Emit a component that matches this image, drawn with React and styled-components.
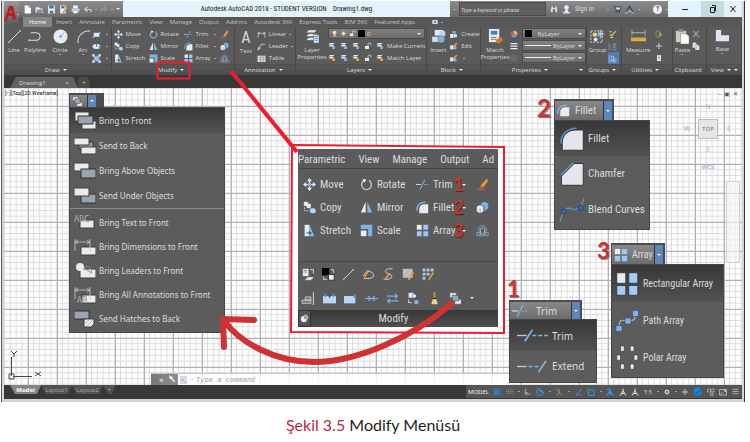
import React from 'react'
import styled, { createGlobalStyle, css, ThemeProvider } from 'styled-components'

const theme = {
  panel: '#5b5b5b',
  dark: '#383838',
  text: '#dcdcdc',
  red: '#ed1c2e',
  marker: '#cf3230',
  blue: '#7fb2e5',
  ui: '"Open Sans", "Noto Sans", sans-serif',
  wide: '"Noto Sans", sans-serif',
  narrow: '"Liberation Sans Narrow", "Roboto Condensed", Roboto, sans-serif',
  caption: 'Lato, sans-serif',
}

const GlobalStyle = createGlobalStyle`
  * {
    box-sizing: border-box;
  }

  body {
    margin: 0;
    background: #fff;
  }

  button, input, select {
    margin: 0;
    padding: 0;
    border: 0;
    background: none;
    color: inherit;
    font: inherit;
  }
`

/* ---------- icons ---------- */

const L = '#e8ecf2'
const B = '#7fb2e5'
const O = '#e59a3c'

const glyphs = {
  line: (
    <>
      <path d="M2 14L14 2" stroke={L} />
      <path d="M1 13h2v2H1zM13 1h2v2h-2z" fill={B} />
    </>
  ),
  polyline: (
    <>
      <path d="M1 12h8a4 4 0 000-8H4" stroke={L} fill="none" />
      <path d="M0 11h2v2H0zM3 3h2v2H3zM9 11h2v2H9z" fill={B} />
    </>
  ),
  circle: (
    <>
      <circle cx="8" cy="8" r="7.5" fill={L} />
      <path d="M8 8l4-4" stroke={B} />
      <path d="M7 7h2v2H7z" fill="#4a7fc0" />
    </>
  ),
  arc: (
    <>
      <path d="M2 14C2 7 7 2 14 2" stroke={L} fill="none" />
      <path d="M1 13h2v2H1zM5 4h2v2H5zM13 1h2v2h-2z" fill={B} />
    </>
  ),
  rect: (
    <>
      <path d="M3 5h10v7H3z" fill={L} />
      <path d="M1 11h3v3H1zM12 3h3v3h-3z" fill={B} />
    </>
  ),
  ellipse: (
    <>
      <ellipse cx="8" cy="8" rx="7" ry="4.5" fill={L} />
      <path d="M7 3h2v6H7zM12 7h3v3h-3z" fill="#4a7fc0" />
    </>
  ),
  hatch: (
    <>
      <path d="M3 3h10v10H3z" fill={B} />
      <path d="M1 1h3v3H1zM12 1h3v3h-3zM1 12h3v3H1zM12 12h3v3h-3zM5 9l4-4M7 12l5-5" fill={L} stroke={L} />
    </>
  ),
  move: (
    <>
      <path d="M8 0l3 4H5zM8 16l3-4H5zM0 8l4-3v6zM16 8l-4-3v6z" fill={L} />
      <path d="M6 6h4v4H6z" fill={B} />
      <path d="M8 3v3M8 10v3M3 8h3M10 8h3" stroke={L} strokeWidth="1.5" />
    </>
  ),
  copy: (
    <>
      <path d="M1 1h5v5H1z" fill={L} />
      <circle cx="7" cy="6" r="3" fill={L} />
      <path d="M2 8v4h4" stroke={L} fill="none" strokeDasharray="2 1" />
      <path d="M8 9h4v5H8z" fill={B} />
      <circle cx="12.500" cy="12" r="3.200" fill="#b9d6f5" />
    </>
  ),
  stretch: (
    <>
      <path d="M2 1h6v14H2z" fill={L} />
      <path d="M8 1l6 14H8z" fill={B} />
      <path d="M4 11h5M7 9l3 2-3 2" stroke="#1f3b5c" fill="none" />
    </>
  ),
  rotate: (
    <>
      <path d="M5 3a6 6 0 106 0" stroke="#bcd0e2" strokeWidth="1.600" fill="none" />
      <path d="M3 1l5 1-3 4z" fill={L} />
    </>
  ),
  mirror: (
    <>
      <path d="M7 1v13H1z" fill={L} />
      <path d="M9 1v13h6z" fill={B} />
    </>
  ),
  scale: (
    <>
      <path d="M1 1h14v14h-5V6H1z" fill={B} />
      <path d="M1 8h7v7H1z" fill={L} />
    </>
  ),
  trim: (
    <>
      <path d="M0 8h6" stroke={L} />
      <path d="M5 14l6-12" stroke={B} strokeWidth="1.300" />
      <path d="M10 8h6" stroke={B} strokeDasharray="2 1" />
    </>
  ),
  trimWide: (
    <>
      <path d="M0 8h5" stroke="#c4c4c4" strokeWidth=".7" />
      <path d="M4 11l4-6" stroke={B} strokeWidth=".9" />
      <path d="M8 8h8" stroke={B} strokeWidth=".7" strokeDasharray="2 1" />
    </>
  ),
  extendWide: (
    <>
      <path d="M0 8h5" stroke="#c4c4c4" strokeWidth=".7" />
      <path d="M6 8h5" stroke={B} strokeWidth=".7" strokeDasharray="2 1" />
      <path d="M11 11l4-6" stroke={B} strokeWidth=".9" />
    </>
  ),
  fillet: (
    <>
      <path d="M4 15V10c0-4 3-6 7-6h4v11z" fill={L} />
      <path d="M1 12C1 5 5 1.500 12 1.500" stroke={B} strokeWidth="1.600" fill="none" />
    </>
  ),
  filletLarge: (
    <>
      <path d="M1.500 15.500V11c0-6 4-9 9-9h5v13.500z" fill="#e3e6ec" stroke="#2e2e2e" strokeWidth=".6" />
      <path d="M.6 11C.6 4.500 5 1 11 .8" stroke="#5d93cf" strokeWidth="1" fill="none" />
    </>
  ),
  chamfer: (
    <>
      <path d="M1 15.500V9.500L9.500 1h6v14.500z" fill="#e3e6ec" stroke="#2e2e2e" strokeWidth=".6" />
      <path d="M.6 8.800L8.800 .6" stroke="#5d93cf" />
    </>
  ),
  blend: (
    <>
      <path d="M0 16l2-7M14 6l2-6" stroke="#8f8f8f" strokeWidth=".7" />
      <path d="M2.500 9c3-6 6 2 11-3" stroke="#5d93cf" strokeWidth=".9" fill="none" />
      <circle cx="2.500" cy="9" r="1.600" fill="#2f6fc4" stroke="#1b2f55" strokeWidth=".5" />
      <circle cx="13.800" cy="6.500" r="1.600" fill="#2f6fc4" stroke="#1b2f55" strokeWidth=".5" />
    </>
  ),
  array: (
    <>
      <path d="M1 1h6v6H1z" fill={L} />
      <path d="M9 1h6v6H9zM1 9h6v6H1zM9 9h6v6H9z" fill="#9cc6f3" />
    </>
  ),
  arrayLarge: (
    <>
      <path d="M.5 .5h6v7h-6z" fill="#e9e9f2" stroke="#2e2e2e" strokeWidth=".5" />
      <path d="M8.500 .5h6v7h-6zM.5 9h6v6.500h-6zM8.500 9h6v6.500h-6z" fill="#a3cbf5" stroke="#2e2e2e" strokeWidth=".5" />
    </>
  ),
  pathArray: (
    <>
      <path d="M2 13C2 5 5 8 8 8s5 0 5-5" stroke="#b5b5b5" fill="none" strokeWidth=".8" />
      <path d="M0 11h4v4H0zM6 6h4v4H6zM11 1h4v4h-4z" fill={B} stroke="#27456f" strokeWidth=".4" />
    </>
  ),
  polarArray: (
    <path
      d="M3 0h2.500v3.500H3zM9.500 0H12v3.500H9.500zM.5 6H3v3.500H.5zM12 6h2.500v3.500H12zM3 12h2.500v3.500H3zM9.500 12H12v3.500H9.500z"
      fill={L}
      stroke="#333"
      strokeWidth=".4"
    />
  ),
  erase: (
    <>
      <path d="M1 14h9" stroke="#d55" strokeWidth="1.300" />
      <path d="M4 13l2-4 3 3z" fill="#d5622b" />
      <path d="M6 9l7-8 2 2-6 9z" fill={O} />
    </>
  ),
  explode: (
    <>
      <path d="M1 7l4-2 4 2v6l-4 2-4-2z" fill={L} />
      <path d="M6 3l4-2 5 2v6l-5 4-1-6z" fill={B} />
      <path d="M5 9v6M10 5v8" stroke="#456" strokeWidth=".6" />
    </>
  ),
  offset: (
    <>
      <path d="M1 14.500h14v-4h-3.500c2.500-4 1-8.500-3.500-8.500S2 6.500 4.500 10.500H1z" stroke={B} fill="none" />
      <path d="M3.500 12.500h3.500c-3-4-1.500-8 1-8s4 4 1 8h3.500" stroke={L} fill="none" strokeWidth=".8" />
    </>
  ),
  linear: <path d="M2 3v11M14 3v11M2 6h12M5 4L2 6l3 2M11 4l3 2-3 2" stroke={L} fill="none" />,
  leader: <path d="M2 14L8 4h6M2 14l1-5M2 14l4-3" stroke={L} fill="none" strokeWidth="1.300" />,
  table: (
    <>
      <path d="M1 3h14v11H1z" fill={L} />
      <path d="M1 6h14M1 10h14M6 3v11M11 3v11" stroke="#777" />
    </>
  ),
  layers: (
    <>
      <path d="M4 1h9l-3 3H1zM4 5h9l-3 3H1zM4 9h9l-3 3H1z" fill={L} stroke="#444" strokeWidth=".4" />
      <path d="M9 6h6v9H9z" fill="#d9e6f5" stroke="#444" strokeWidth=".5" />
      <path d="M10 8h4M10 10h4M10 12h4" stroke="#4a7fc0" strokeWidth=".8" />
    </>
  ),
  layer: (
    <>
      <path d="M4 2h9l-3 3H1zM4 6h8l-3 3H1z" fill={L} />
      <path d="M8 8h6v6H8z" fill={B} />
    </>
  ),
  layerHot: (
    <>
      <path d="M4 2h9l-3 3H1zM4 6h8l-3 3H1z" fill={L} />
      <circle cx="11" cy="11" r="3.500" fill={O} />
    </>
  ),
  bulb: (
    <>
      <circle cx="8" cy="6" r="4.500" fill="#f4e48a" />
      <path d="M6 10h4v5H6z" fill="#d8d8d8" />
    </>
  ),
  sun: (
    <>
      <circle cx="8" cy="8" r="3.500" fill="#f5edb8" />
      <path d="M8 0v16M0 8h16M2 2l12 12M14 2L2 14" stroke="#e5deb0" strokeWidth=".8" />
    </>
  ),
  lock: (
    <>
      <path d="M2 8h8v6H2z" fill={L} />
      <path d="M8 8V5a3 3 0 016 0v2" stroke={L} fill="none" strokeWidth="1.500" />
    </>
  ),
  insert: (
    <>
      <path d="M4 1h9v6H4z" fill={L} />
      <circle cx="12" cy="5" r="3.500" fill="#b9d6f5" />
      <path d="M1 8h9v6H1z" fill="#cfe0f3" stroke="#555" strokeWidth=".4" />
      <circle cx="11" cy="11" r="3.800" fill={B} stroke="#555" strokeWidth=".4" />
    </>
  ),
  block: (
    <>
      <path d="M2 7h6v7H2z" fill={L} />
      <path d="M6 2h6v4H6z" fill={B} />
      <circle cx="11" cy="10" r="3.500" fill="#cfe0f3" />
    </>
  ),
  blockEdit: (
    <>
      <path d="M2 6h6v7H2z" fill={L} />
      <circle cx="10" cy="10" r="3.500" fill={B} />
      <path d="M7 7l6-6 2 2-6 6z" fill={O} />
    </>
  ),
  match: (
    <>
      <path d="M1 0h11v14H1z" fill={L} />
      <path d="M3 2h7v4H3z" fill="#3e82c9" />
      <path d="M3 9h6M3 11h6" stroke="#777" />
      <path d="M8 12l6-4 2 4-5 4z" fill="#d5772b" />
    </>
  ),
  wheel: (
    <>
      <path d="M8 8V1a7 7 0 016 10z" fill="#e8c33a" />
      <path d="M8 8l6 3.500A7 7 0 012 11.500z" fill="#58a6e0" />
      <path d="M8 8l-6 3.500A7 7 0 018 1z" fill="#d94f6b" />
    </>
  ),
  lines: <path d="M1 3h14M1 8h14M1 13h14" stroke={L} strokeWidth="2.500" />,
  dots: <path d="M2 2h12v12H2zM2 6h12M2 10h12M6 2v12M10 2v12" stroke="#999" strokeDasharray="1 1" fill="none" />,
  group: (
    <>
      <path d="M1 2h12v12H1z" stroke={L} strokeDasharray="2 1.500" fill="none" />
      <path d="M3 4h4v4H3z" fill="#e7dc73" />
      <circle cx="6" cy="11" r="2" fill={L} />
      <path d="M11 1v9M6.500 5.500h9M8 2.500l6 6M14 2.500l-6 6" stroke="#b9def9" />
    </>
  ),
  ungroup: <path d="M2 3h5M8 8l6-6M3 9h6M4 13h5" stroke="#e7c861" strokeWidth="2" fill="none" />,
  groupEdit: <path d="M2 2v12h4M2 8h4M9 3h5v3H9zM9 9h5v5H9z" stroke="#aaa8c8" fill="none" />,
  groupOn: <path d="M2 2v12h4M6 4h4v8H6zM9 9h5v5H9z" stroke="#dfeaf7" fill="none" />,
  measure: (
    <>
      <path d="M1 1v6M15 1v6M1 4h14" stroke="#b5b5b5" />
      <path d="M0 9h16v4H0z" fill="#e8b23a" />
      <path d="M2 9v2M5 9v2M8 9v2M11 9v2M14 9v2" stroke="#7b5a12" strokeWidth=".5" />
    </>
  ),
  select: (
    <>
      <path d="M2 2h8v12H2z" stroke="#67b45c" fill="none" strokeWidth="1.500" />
      <path d="M8 4l7 6-4 1-2 4z" fill={O} />
    </>
  ),
  plus: <path d="M8 2v12M2 8h12" stroke={L} strokeWidth="1.500" />,
  calc: (
    <>
      <path d="M4 2h8v12H4z" fill={L} />
      <path d="M6 4h4M6 7h4M6 10h4" stroke="#666" />
    </>
  ),
  paste: (
    <>
      <path d="M1 2h11v12H1z" fill="#cfc9be" />
      <path d="M4 0h5v3H4z" fill="#888" />
      <path d="M6 5h6l3 3v8H6z" fill="#fff" stroke="#666" strokeWidth=".5" />
    </>
  ),
  cut: (
    <>
      <path d="M3 2l8 9M13 2L5 11" stroke={L} strokeWidth="1.300" />
      <circle cx="4" cy="12.500" r="2" stroke="#b5b5b5" fill="none" />
      <circle cx="12" cy="12.500" r="2" stroke="#b5b5b5" fill="none" />
    </>
  ),
  pages: <path d="M1 1h6l3 3v8H1zM6 5h5l4 3v8H6z" fill={L} stroke="#555" strokeWidth=".6" />,
  base: <path d="M1 1h6v6h9v7H1z" fill="#dfe6f2" />,
  file: (
    <>
      <path d="M3 1h7l4 4v10H3z" fill="#fff" />
      <path d="M10 1l4 4h-4z" fill="#999" />
    </>
  ),
  open: (
    <>
      <path d="M1 4h6l2 2h5v8H1z" fill={L} />
      <path d="M4 8h11l-3 6H2z" fill="#7c93ab" />
    </>
  ),
  save: (
    <>
      <path d="M2 1h12v14H2z" fill={L} />
      <path d="M4 1h8v5H4zM5 10h6v5H5z" fill="#56718e" />
    </>
  ),
  saveAs: (
    <>
      <path d="M2 1h10v14H2z" fill={L} />
      <path d="M4 2h6v4H4z" fill="#56718e" />
      <path d="M6 13l7-9 2 2-7 9z" fill={O} />
    </>
  ),
  print: (
    <>
      <path d="M4 1h8v5H4z" fill="#fff" />
      <path d="M1 6h14v6H1z" fill="#ccd3da" />
      <path d="M4 10h8v5H4z" fill="#fff" stroke="#666" strokeWidth=".5" />
    </>
  ),
  undo: <path d="M14 13V8H4M8 3L3 8l5 4" stroke="#c5c9d0" strokeWidth="2.200" fill="none" />,
  redo: <path d="M2 13V8h10M8 3l5 5-5 4" stroke="#9a9a9a" strokeWidth="2.200" fill="none" />,
  binoculars: <path d="M3 1h3v4h4V1h3l2 8v6H10V9H6v6H1V9z" fill="#e2e2e2" stroke="#333" strokeWidth=".7" />,
  person: (
    <>
      <circle cx="8" cy="4.500" r="4" fill="#eef3fa" />
      <path d="M6 8h4l1 4h3v3H2v-3h3z" fill="#eef3fa" />
      <path d="M1 14h14" stroke={B} />
    </>
  ),
  cart: (
    <>
      <path d="M1 2h3l2 8h8l2-6H5" stroke="#22385c" strokeWidth="1.600" fill="#d9e4f1" />
      <path d="M5 12h3v3H5zM11 12h3v3h-3z" fill="#22385c" />
    </>
  ),
  exchange: (
    <>
      <path d="M2 13L8 2l6 11" stroke="#29436d" strokeWidth="2" fill="none" />
      <path d="M4 11h8M0 14h5M11 14h5" stroke="#c8d8ea" strokeWidth="1.500" />
    </>
  ),
  viewport: (
    <>
      <path d="M1 3h14v10H1z" fill={L} />
      <circle cx="8" cy="8" r="2.500" fill="#444" />
    </>
  ),
  setBylayer: (
    <>
      <path d="M1 1h7v9H1z" fill={L} />
      <path d="M2 3h4M2 5h4" stroke="#4a7fc0" />
      <path d="M10 2h4v5" stroke={L} fill="none" />
      <path d="M7 11h8l-4 4H3z" fill={L} stroke="#444" strokeWidth=".4" />
    </>
  ),
  bwSwap: (
    <>
      <path d="M0 0h9v9H0z" fill="#000" />
      <path d="M8 8h7v7H8z" fill={L} stroke="#222" />
      <path d="M11 2h3v4M2 11v3h4" stroke={L} fill="none" />
    </>
  ),
  pline: (
    <>
      <path d="M1 10l5-6c6 0 9 3 8 6s-5 3-12 3" stroke={L} fill="none" />
      <path d="M2 12l5-10 2 1-5 9z" fill={O} />
    </>
  ),
  spline: (
    <>
      <path d="M13 1C4 0 1 5 8 7s5 8-6 7" stroke={L} fill="none" />
      <path d="M2 14l7-8 2 1-7 8z" fill={O} />
    </>
  ),
  hatchEdit: (
    <>
      <path d="M1 1h12v11H1z" fill="#cfcfcf" />
      <path d="M1 5l4-4M1 9l8-8M1 12L12 1M5 12l8-8" stroke="#777" strokeWidth=".7" />
      <path d="M7 14l6-9 2 1-6 9z" fill={O} />
    </>
  ),
  arrayEdit: (
    <>
      <path d="M1 1h3v3H1zM6 1h3v3H6zM11 1h3v3h-3zM1 6h3v3H1zM6 6h3v3H6zM1 11h3v3H1z" fill="#9cc6f3" stroke="#dde" strokeWidth=".4" />
      <path d="M7 15l6-10 2 1-6 9z" fill={O} />
    </>
  ),
  align: (
    <>
      <path d="M4 6h7v4H4zM0 10h11v4H0z" stroke={L} fill="#777" strokeWidth=".8" />
      <path d="M14 0v16" stroke={L} />
    </>
  ),
  break: (
    <>
      <path d="M0 5h16v9H0z" fill="#b9d6f5" />
      <path d="M3 2v4M13 2v4" stroke="#5c93d6" strokeWidth="2" />
      <path d="M8 4v3" stroke="#444" strokeWidth="2" />
    </>
  ),
  breakPoint: (
    <>
      <path d="M0 5h14v9H0z" fill="#b9d6f5" />
      <path d="M13 3v4" stroke="#5c93d6" strokeWidth="2.500" />
    </>
  ),
  join: <path d="M0 8h6M16 8h-6M4 5l3 3-3 3M12 5L9 8l3 3" stroke={B} strokeWidth="1.500" fill="none" />,
  reverse: <path d="M1 5h13M11 2l3 3-3 3M15 11H2M5 8l-3 3 3 3" stroke={B} strokeWidth="1.400" fill="none" />,
  copyNested: (
    <>
      <path d="M2 1h6v6H2z" fill={L} />
      <circle cx="9" cy="5" r="2.500" fill={L} stroke="#444" strokeWidth=".5" />
      <path d="M2 9v4h4" stroke={L} fill="none" />
      <path d="M9 10h5v5H9z" fill={B} />
    </>
  ),
  broom: (
    <>
      <path d="M8 0v8" stroke="#d8973a" strokeWidth="2" />
      <path d="M6 8h4l2 7H4z" fill="#e8d688" />
      <path d="M6 8h4" stroke="#222" strokeWidth="1.500" />
    </>
  ),
  drawOrder: (
    <>
      <path d="M1 1h8v6H1zM7 9h8v6H7z" fill={L} stroke="#444" strokeWidth=".6" />
      <path d="M4 4h8v7H4z" fill="#98a3b3" stroke="#333" strokeWidth=".6" />
    </>
  ),
  pin: (
    <>
      <circle cx="7" cy="9" r="5.500" fill="#f2f2f2" />
      <circle cx="10" cy="6" r="4" fill="#9a9a9a" stroke="#fff" />
    </>
  ),
  wrench: <path d="M4 4l9 9M2 1l1 4 3 1 1-3z" stroke="#f2f2f2" strokeWidth="3" fill="none" />,
  grid: <path d="M1 4h14M1 8h14M1 12h14M4 1v14M8 1v14M12 1v14" stroke="#2b83d9" strokeWidth="2" />,
  snap: <path d="M1 4h14M1 8h14M1 12h14" stroke="#aaa" strokeWidth="2" strokeDasharray="2 2" />,
  ortho: <path d="M3 1v13h12M3 10h4v4" stroke="#ddd" strokeWidth="1.300" fill="none" />,
  polar: <path d="M8 1a7 7 0 107 7M8 8V1M8 8h7M8 4a4 4 0 014 4" stroke="#2f9bff" strokeWidth="1.800" fill="none" />,
  iso: <path d="M2 1l12 14M8 1v7M5 15l3-7" stroke="#aaa" strokeWidth="1.300" />,
  track: <path d="M2 14L14 2M2 14h12" stroke="#2f9bff" strokeWidth="1.600" />,
  osnap: (
    <>
      <path d="M3 4h11v11H3z" stroke="#2f9bff" strokeWidth="1.800" fill="none" />
      <path d="M0 1h5v5H0z" fill="#1f9a4c" />
    </>
  ),
  annoOn: <path d="M8 1v6M8 6L2 15M8 6l6 9M4 11h8M2 4l4-2" stroke="#2f9bff" strokeWidth="2.500" fill="none" />,
  anno: <path d="M8 1v6M8 6L2 15M8 6l6 9M4 11h8" stroke="#e5e5e5" strokeWidth="2" fill="none" />,
  gear: (
    <>
      <circle cx="8" cy="8" r="5" stroke="#e5e5e5" strokeWidth="3" strokeDasharray="3 1" fill="none" />
      <circle cx="8" cy="8" r="4" stroke="#e5e5e5" strokeWidth="2" fill="none" />
    </>
  ),
  accel: (
    <>
      <circle cx="8" cy="8" r="7" fill="#1585ec" />
      <path d="M4 9l3 3 6-7" stroke="#123f70" strokeWidth="1.500" fill="none" />
    </>
  ),
  isolate: (
    <>
      <path d="M1 2h6v6H1z" stroke="#ccc" strokeWidth="1.300" fill="none" />
      <circle cx="12" cy="5" r="3" stroke="#ccc" strokeWidth="1.300" fill="none" />
      <path d="M7 10h5v5H7z" stroke="#ccc" strokeWidth="1.300" fill="none" />
    </>
  ),
  clean: <path d="M1 3h14v11H1zM9 8l4-3M10 5h3v3M7 9l-4 3" stroke="#ddd" strokeWidth="1.300" fill="none" />,
  burger: <path d="M1 3h14M1 8h14M1 13h14" stroke="#ddd" strokeWidth="1.500" />,
}

const Svg = styled.svg`
  flex: none;
  display: block;
  overflow: visible;
  width: ${({ $size }) => $size}px;
  height: ${({ $size }) => $size}px;
`

const Icon = ({ name, size = 9 }) => (
  <Svg $size={size} viewBox="0 0 16 16" aria-hidden="true">
    {glyphs[name]}
  </Svg>
)

const Caret = styled.span`
  flex: none;
  width: 0;
  height: 0;
  border: ${({ $size = 2 }) => $size}px solid transparent;
  border-top-color: ${({ $color = '#eee' }) => $color};
  border-bottom: 0;
`

/* ---------- window frame ---------- */

const Page = styled.div`
  min-width: 700px;
  font-family: ${({ theme }) => theme.ui};
  font-size: 6px;
  line-height: 8px;
  color: ${({ theme }) => theme.text};
`

const AppWindow = styled.main`
  position: relative;
  margin: 1px 5px 0 1px;
  padding: 0 2px 3px;
  border-left: 1px solid #5a5a5a;
  border-right: 1px solid #2f3338;
  background: #d6d2d4;
`

const Header = styled.header`
  display: grid;
  grid-template-columns: 15px 1fr;
  grid-template-rows: 16px 10px;
  background: ${({ theme }) => theme.panel};
`

const AppButton = styled.button`
  grid-row: span 2;
  display: flex;
  align-items: center;
  gap: 1px;
  background: linear-gradient(#9a9a9a, #565656);
`

const Logo = styled.svg`
  width: 12px;
  height: 18px;
`

const TitleBar = styled.div`
  display: flex;
  align-items: stretch;
  background: linear-gradient(#8c8c8c, #6c6c6c);
`

const QuickAccess = styled.div`
  width: 104px;
  padding-left: 4px;
  display: flex;
  align-items: center;
  gap: 3px;
`

const Title = styled.h1`
  flex: 1;
  margin: 0;
  background: #e3f3fb;
  color: #222;
  font-family: ${({ theme }) => theme.narrow};
  font-weight: 400;
  font-size: 7px;
  line-height: 16px;
  text-align: center;
  white-space: pre;
`

const Search = styled.div`
  width: 218px;
  padding-left: 3px;
  display: flex;
  align-items: center;
  gap: 4px;
  font-family: ${({ theme }) => theme.narrow};
  font-size: 7px;
`

const SearchInput = styled.input`
  width: 87px;
  height: 14px;
  padding-left: 1px;
  background: #606060;
  border: 1px solid #4c4c4c;
  font-size: 6px;
  font-style: italic;

  &::placeholder {
    color: #d0d0d0;
  }
`

const Help = styled.button`
  width: 9px;
  height: 9px;
  border-radius: 50%;
  background: #eef3fa;
  color: #25549b;
  font-weight: 700;
  line-height: 9px;
`

const Spacer = styled.span`
  flex: 1;
`

const WindowButtons = styled.div`
  width: 74px;
  display: grid;
  grid-template-columns: 33px 23px 18px;
  background: #e3f3fb;
`

const WindowButton = styled.button`
  display: grid;
  place-items: center;
  background: ${({ $active }) => ($active ? '#c3dbe1' : 'none')};

  svg {
    width: 6px;
    height: 8px;
  }
`

/* ---------- ribbon ---------- */

const TabList = styled.nav`
  padding-left: 4px;
  display: flex;
  align-items: stretch;
  gap: 1px;
  background: #575757;
`

const Tab = styled.button`
  padding: 0 ${({ $active }) => ($active ? 6 : 3)}px;
  background: ${({ $active }) => ($active ? '#858585' : 'none')};
  color: ${({ $active }) => ($active ? '#fff' : '#c6c6c6')};
  line-height: 10px;
  white-space: nowrap;
`

const ViewTab = styled(Tab)`
  margin-left: 10px;
  display: flex;
  align-items: center;
  gap: 3px;
`

const Ribbon = styled.div`
  display: flex;
  background: ${({ theme }) => theme.panel};
`

const Panel = styled.section`
  flex: ${({ $w }) => $w} 1 0;
  min-width: 0;
  border-right: 1px solid #474747;
`

const PanelBody = styled.div`
  height: 37px;
  padding: 1px 0 0 ${({ $pad = 0 }) => $pad}px;
  display: flex;
`

const PanelTitle = styled.div`
  height: 11px;
  padding-right: 3px;
  display: flex;
  align-items: center;
  border-top: 1px solid #4f4f4f;
  background: linear-gradient(#575757, #4c4c4c);
`

const TitleButton = styled.button`
  flex: 1;
  display: flex;
  align-items: center;
  justify-content: center;
  gap: 3px;
  line-height: 10px;
`

const BigButton = styled.button`
  flex: none;
  width: ${({ $w }) => $w}px;
  padding-top: 1px;
  display: flex;
  flex-direction: column;
  align-items: center;
  justify-content: flex-start;
  line-height: 7px;
  text-align: center;
  white-space: pre-line;

  ${Svg} {
    margin-bottom: 3px;
  }
`

const BigLetter = styled.span`
  height: 19px;
  font-family: ${({ theme }) => theme.narrow};
  font-size: 16px;
  line-height: 18px;
`

const Stack = styled.div`
  display: grid;
  grid-template-columns: ${({ $cols = 'auto' }) => $cols};
  grid-auto-rows: 12px;
  align-content: start;
`

const Tool = styled.button`
  display: flex;
  align-items: center;
  gap: 3px;
  white-space: nowrap;
  ${({ $on }) =>
    $on &&
    css`
      background: #4f7db3;
    `}

  ${Caret} {
    margin-left: ${({ $push }) => ($push ? 'auto' : '2px')};
    margin-right: 4px;
  }
`

const LayerTools = styled.div`
  flex: 1;
  padding-right: 1px;
  display: grid;
  grid-template-columns: repeat(4, 12px) 1fr;
  grid-auto-rows: 12px;
  align-content: start;
`

const Field = styled.label`
  grid-column: 1 / -1;
  height: 11px;
  padding: 0 3px 0 2px;
  display: flex;
  align-items: center;
  gap: 2px;
  background: linear-gradient(#808080, #6d6d6d);
  border: 1px solid #4b4b4b;
`

const Swatch = styled.span`
  width: 7px;
  height: 7px;
  background: #000;
`

const Rule = styled.span`
  flex: 1;
  height: ${({ $h }) => $h}px;
  background: #eee;
`

const Select = styled.select`
  flex: ${({ $grow }) => ($grow ? 1 : 'none')};
  appearance: none;
  padding-left: ${({ $pad = 0 }) => $pad}px;
`

const FieldColumn = styled.div`
  flex: 1;
  display: grid;
  grid-auto-rows: 12px;
`

const FileTabs = styled.div`
  height: 13px;
  padding: 2px 0 0 6px;
  display: flex;
  background: ${({ theme }) => theme.dark};
`

const FileTab = styled.button`
  width: 68px;
  padding: 0 9px;
  display: flex;
  justify-content: space-between;
  align-items: center;
  background: #626262;
  clip-path: polygon(6px 0, calc(100% - 5px) 0, 100% 100%, 0 100%);
`

const AddTab = styled.button`
  width: 12px;
  background: #4a4a4a;
  border-radius: 3px 5px 0 0;
`

/* ---------- drawing area ---------- */

const Canvas = styled.div`
  position: relative;
  height: 297px;
  overflow: hidden;
  background: #fff;
`

const Grid = styled.svg`
  position: absolute;
  inset: 0;
  width: 100%;
  height: 100%;
`

const Floating = styled.div`
  position: absolute;
  left: ${({ $x }) => $x}px;
  top: ${({ $y }) => $y}px;
`

const ViewLabel = styled(Floating)`
  color: #222;
  font-family: ${({ theme }) => theme.narrow};
  font-size: 6px;
`

const SplitButton = styled.div`
  width: ${({ $w }) => $w}px;
  height: ${({ $h }) => $h}px;
  padding: 2px ${({ $tail = 2 }) => $tail}px 0 1px;
  display: flex;
  background: #4c4c4c;
`

const SplitMain = styled.button`
  flex: 1;
  padding-left: 2px;
  display: flex;
  align-items: center;
  gap: ${({ $gap = 4 }) => $gap}px;
  background: linear-gradient(#888, #6c6c6c);
`

const SplitArrow = styled.button`
  width: 9px;
  display: grid;
  place-items: center;
  background: #5b87bb;
  border-left: 1px solid #333;
`

const Menu = styled.div`
  width: ${({ $w }) => $w}px;
  padding-bottom: 1px;
  border: 1px solid #474747;
  background: #5c5c5c;
`

const MenuItem = styled.button`
  width: 100%;
  height: ${({ $h }) => $h}px;
  padding-left: ${({ $pad = 4 }) => $pad}px;
  display: flex;
  align-items: center;
  gap: ${({ $gap = 4 }) => $gap}px;
  white-space: nowrap;
  ${({ $active }) =>
    $active &&
    css`
      background: linear-gradient(#383838, #525252);
    `}
`

const MenuRule = styled.hr`
  margin: 0 0 2px;
  border: 0;
  border-top: 1px solid #8c8c8c;
`

const OrderIcon = styled.svg`
  flex: none;
  width: 22px;
  height: 18px;
`

const OrderMenu = styled(Floating)`
  font-family: ${({ theme }) => theme.wide};
  font-size: 8px;
`

const NarrowMenu = styled(Floating)`
  font-family: ${({ theme }) => theme.narrow};
  font-size: ${({ $size = 11 }) => $size}px;
  line-height: 14px;
`

const WideMenu = styled(Floating)`
  font-family: ${({ theme }) => theme.wide};
  font-size: 10px;
  line-height: 14px;
`

const Detail = styled(Floating)`
  width: 200px;
  background: ${({ theme }) => theme.panel};
  font-family: ${({ theme }) => theme.narrow};
  font-size: 11px;
  line-height: 14px;
`

const DetailTabs = styled.div`
  height: 20px;
  padding-top: 4px;
  display: flex;
  gap: 13px;
  overflow: hidden;
  border-bottom: 1px solid #444;
`

const DetailTools = styled.div`
  height: 93px;
  padding: 4px 0 0 5px;
  display: grid;
  grid-template-columns: 57px 56px 60px 16px;
  grid-auto-rows: 23px;
  border-bottom: 1px solid #484848;
`

const DetailTool = styled.button`
  display: flex;
  align-items: center;
  gap: 4px;

  ${Caret} {
    margin-left: auto;
    margin-right: 10px;
  }
`

const DetailRow = styled.div`
  height: 24px;
  padding-left: 4px;
  display: flex;
  align-items: center;
  gap: ${({ $gap }) => $gap}px;
`

const DetailFooter = styled.div`
  height: 17px;
  display: flex;
  align-items: center;
  background: linear-gradient(#383838, #4e4e4e);
  text-align: center;
`

const PinButton = styled.button`
  width: 13px;
  height: 17px;
  display: grid;
  place-items: center;
  border: 1px solid #333;
  background: #555;
`

const DetailName = styled.span`
  flex: 1;
  padding-right: 22px;
`

const Marker = styled.span`
  position: absolute;
  left: ${({ $x }) => $x}px;
  top: ${({ $y }) => $y}px;
  color: ${({ theme }) => theme.marker};
  font-family: ${({ theme }) => theme.caption};
  font-weight: 700;
  font-size: ${({ $size }) => $size}px;
  line-height: ${({ $size }) => $size}px;
  text-shadow: 1px 1px 1px rgba(0, 0, 0, 0.5);
`

const Corner = styled.div`
  position: absolute;
  top: 2px;
  right: 4px;
  display: flex;
  gap: 3px;
  color: #555;
`

const ViewCube = styled.div`
  position: absolute;
  top: 15px;
  right: 7px;
  display: grid;
  grid-template-columns: 12px 20px 12px;
  grid-template-rows: 16px 20px 22px 12px;
  gap: 0 5px;
  align-items: center;
  justify-items: center;
  color: #bcbcbc;
  font-weight: 600;
  font-size: 7px;
`

const Cell = styled.span`
  grid-column: ${({ $col }) => $col};
  align-self: ${({ $top }) => ($top ? 'start' : 'center')};
  color: ${({ $color }) => $color};
  font-size: ${({ $color }) => ($color ? 6 : 7)}px;
`

const CubeFace = styled.button`
  grid-column: 2;
  width: 20px;
  height: 20px;
  border: 1px solid #bdbdbd;
  background: #e6e6e9;
  color: #85858f;
  font-size: 6px;
`

const NavBar = styled.div`
  position: absolute;
  top: 93px;
  right: 2px;
  width: 14px;
  height: 82px;
  border: 1px solid #d0d0d0;
  border-radius: 3px;
  background: rgba(245, 245, 245, 0.7);
`

const Ucs = styled.svg`
  position: absolute;
  left: 3px;
  bottom: 0;
  width: 32px;
  height: 34px;
  overflow: visible;
`

const CommandLine = styled.div`
  position: absolute;
  left: 147px;
  bottom: 0;
  width: 360px;
  height: 12px;
  display: flex;
  align-items: center;
  background: rgba(255, 255, 255, 0.85);
  border-top: 1px solid #c4c4c4;
`

const CommandTools = styled.div`
  width: 27px;
  height: 12px;
  padding: 0 2px 0 8px;
  display: flex;
  align-items: center;
  justify-content: space-between;
  background: linear-gradient(90deg, #777, #8e8e8e);
  color: #fff;
  font-size: 8px;
`

const Prompt = styled.span`
  margin: 0 4px 0 2px;
  padding: 0 1px;
  background: #d6dde6;
  color: #5f6b7a;
  font-size: 5px;
`

const CommandInput = styled.input`
  flex: 1;
  height: 10px;
  padding-left: 3px;
  color: #555;
  font-family: 'DejaVu Sans Mono', monospace;
  font-style: italic;
  font-size: 7px;

  &::placeholder {
    color: #9c9c9c;
  }
`

const Annotations = styled.svg`
  position: absolute;
  top: -1px;
  left: -2px;
  width: 742px;
  height: 402px;
  overflow: visible;
  pointer-events: none;
`

/* ---------- status bar and caption ---------- */

const StatusBar = styled.footer`
  height: 14px;
  padding-left: 6px;
  display: flex;
  justify-content: space-between;
  background: ${({ theme }) => theme.dark};
`

const LayoutTabs = styled.div`
  display: flex;
  height: 9px;
`

const LayoutTab = styled.button`
  width: ${({ $w = 31 }) => $w}px;
  background: ${({ $active }) => ($active ? '#868686' : '#525252')};
  color: ${({ $active }) => ($active ? '#fff' : '#ababab')};
  font-weight: ${({ $active }) => ($active ? 700 : 400)};
  clip-path: polygon(0 0, 100% 0, calc(100% - 4px) 100%, 5px 100%);
`

const StatusTools = styled.div`
  width: 276px;
  height: 13px;
  padding: 0 3px 0 2px;
  display: flex;
  align-items: center;
  justify-content: space-between;
  background: #555;
  color: #fff;
`

const StatusButton = styled.button`
  display: flex;
  align-items: center;
  gap: 5px;
`

const Caption = styled.p`
  margin: 0;
  padding: 13px 4px 6px 0;
  color: #231f20;
  font-family: ${({ theme }) => theme.caption};
  font-size: 16px;
  line-height: 20px;
  text-align: center;
`

const FigureNumber = styled.span`
  color: #c41f45;
`

/* ---------- data ---------- */

const tabs = [
  'Home', 'Insert', 'Annotate', 'Parametric', 'View', 'Manage', 'Output', 'Add-ins',
  'Autodesk 360', 'Express Tools', 'BIM 360', 'Featured Apps',
]

const modifyTools = [
  ['move', 'Move'], ['rotate', 'Rotate'], ['trim', 'Trim', true], ['erase'],
  ['copy', 'Copy'], ['mirror', 'Mirror'], ['fillet', 'Fillet', true], ['explode'],
  ['stretch', 'Stretch'], ['scale', 'Scale'], ['array', 'Array', true], ['offset'],
]

const sheet = { fill: '#e9ebef', stroke: '#3f3f3f', strokeWidth: 1 }
const slate = { fill: '#9aa4b1', stroke: '#303030', strokeWidth: 1 }

const orderItems = [
  ['Bring to Front', <><rect x="1" y="0" width="14" height="9" {...sheet} /><rect x="8" y="9" width="14" height="8" {...sheet} /><rect x="4" y="4" width="15" height="8" {...slate} /></>],
  ['Send to Back', <><rect x="5" y="5" width="14" height="7" {...slate} /><rect x="0" y="1" width="15" height="7" {...sheet} /><rect x="7" y="10" width="15" height="7" {...sheet} /></>],
  ['Bring Above Objects', <><rect x="0" y="1" width="15" height="8" {...sheet} /><rect x="7" y="7" width="15" height="9" {...slate} /></>],
  ['Send Under Objects', <><rect x="7" y="7" width="15" height="9" {...slate} /><rect x="0" y="1" width="15" height="8" {...sheet} /></>],
]

const dimension = <path d="M1 1v12M16 1v12M1 4h15M4 2L1 4l3 2M13 2l3 2-3 2" stroke="#c9c9c9" fill="none" strokeWidth=".8" />

const annotationItems = [
  ['Bring Text to Front', <><rect x="6" y="6" width="14" height="8" {...sheet} /><text x="0" y="8" fontSize="8" fill="#c9c9c9" stroke="#666" strokeWidth=".2">ABC</text></>],
  ['Bring Dimensions to Front', <><rect x="7" y="9" width="15" height="8" {...sheet} />{dimension}</>],
  ['Bring Leaders to Front', <><rect x="6" y="7" width="16" height="9" {...sheet} /><circle cx="6" cy="5" r="4" fill="#e9ebef" /><path d="M10 6c4-3 6-2 8 5l-4-2z" stroke="#999" fill="none" /></>],
  ['Bring All Annotations to Front', <><rect x="8" y="9" width="14" height="8" {...sheet} />{dimension}<text x="3" y="17" fontSize="8" fill="#f3f3f3" stroke="#555" strokeWidth=".3">AB</text></>],
  ['Send Hatches to Back', <><rect x="0" y="1" width="15" height="8" {...slate} /><path d="M10 9h10v5l-3 3h-7z" {...sheet} /><path d="M11 14l5-5M13 16l6-6" stroke="#999" strokeWidth=".6" /></>],
]

/* ---------- parts ---------- */

const RibbonPanel = ({ w, pad, title, caret = true, corner, children }) => (
  <Panel $w={w}>
    <PanelBody $pad={pad}>{children}</PanelBody>
    <PanelTitle>
      <TitleButton>
        {title}
        {caret && <Caret />}
      </TitleButton>
      {corner && <Caret />}
    </PanelTitle>
  </Panel>
)

const Big = ({ w, icon, size = 15, caret, children }) => (
  <BigButton $w={w}>
    {icon ? <Icon name={icon} size={size} /> : <BigLetter>A</BigLetter>}
    {children}
    {caret && <Caret $size={1} />}
  </BigButton>
)

const Small = ({ icon, size = 9, caret, push, on, label, children }) => (
  <Tool $push={push} $on={on} aria-label={label}>
    {icon && <Icon name={icon} size={size} />}
    {children}
    {caret && <Caret $size={1} />}
  </Tool>
)

const DropButton = ({ w, h, icon, size, gap, tail, label, children }) => (
  <SplitButton $w={w} $h={h} $tail={tail}>
    <SplitMain $gap={gap} aria-label={label}>
      <Icon name={icon} size={size} />
      {children}
    </SplitMain>
    <SplitArrow aria-label="More">
      <Caret />
    </SplitArrow>
  </SplitButton>
)

const RibbonPanels = () => (
  <Ribbon>
    <RibbonPanel w={108} title="Draw">
      <Big w={20} icon="line">Line</Big>
      <Big w={22} icon="polyline">Polyline</Big>
      <Big w={28} icon="circle" caret>Circle</Big>
      <Big w={18} icon="arc" caret>Arc</Big>
      <Stack $cols="20px">
        <Small icon="rect" caret push label="Rectangle" />
        <Small icon="ellipse" caret push label="Ellipse" />
        <Small icon="hatch" caret push label="Hatch" />
      </Stack>
    </RibbonPanel>
    <RibbonPanel w={124} pad={2} title="Modify">
      <Stack $cols="35px 35px 36px 12px">
        {modifyTools.map(([icon, name, caret]) => (
          <Small key={icon} icon={icon} caret={caret} push label={name || icon}>
            {name}
          </Small>
        ))}
      </Stack>
    </RibbonPanel>
    <RibbonPanel w={61} title="Annotation">
      <Big w={22}>Text</Big>
      <Stack $cols="37px">
        <Small icon="linear" caret push>Linear</Small>
        <Small icon="leader" caret push>Leader</Small>
        <Small icon="table">Table</Small>
      </Stack>
    </RibbonPanel>
    <RibbonPanel w={132} title="Layers">
      <Big w={32} icon="layers">{'Layer\nProperties'}</Big>
      <LayerTools>
        <Field>
          <Icon name="bulb" size={7} />
          <Icon name="sun" size={7} />
          <Icon name="lock" size={7} />
          <Swatch />
          <Select $grow aria-label="Layer" defaultValue="0">
            <option>0</option>
          </Select>
          <Caret />
        </Field>
        <Small icon="layer" size={8} label="Off" />
        <Small icon="layer" size={8} label="Isolate" />
        <Small icon="layer" size={8} label="Freeze" />
        <Small icon="lock" size={8} label="Lock" />
        <Small icon="layer" size={8}>Make Current</Small>
        <Small icon="layerHot" size={8} label="On" />
        <Small icon="layer" size={8} label="Unisolate" />
        <Small icon="layerHot" size={8} label="Thaw" />
        <Small icon="lock" size={8} label="Unlock" />
        <Small icon="layerHot" size={8}>Match Layer</Small>
      </LayerTools>
    </RibbonPanel>
    <RibbonPanel w={53} title="Block">
      <Big w={22} icon="insert">Insert</Big>
      <Stack $cols="30px">
        <Small icon="block">Create</Small>
        <Small icon="blockEdit">Edit</Small>
        <Small icon="blockEdit" caret label="Attributes" />
      </Stack>
    </RibbonPanel>
    <RibbonPanel w={107} title="Properties" corner>
      <Big w={29} icon="match">{'Match\nProperties'}</Big>
      <Stack $cols="12px">
        <Small icon="wheel" size={8} label="Color" />
        <Small icon="lines" size={8} label="Lineweight" />
        <Small icon="dots" size={8} label="Linetype" />
      </Stack>
      <FieldColumn>
        <Field>
          <Swatch />
          <Select $grow $pad={4} aria-label="Object color">
            <option>ByLayer</option>
          </Select>
          <Caret />
        </Field>
        <Field>
          <Rule $h={1} />
          <Select aria-label="Lineweight">
            <option>ByLayer</option>
          </Select>
          <Caret />
        </Field>
        <Field>
          <Rule $h={1} />
          <Select aria-label="Linetype">
            <option>ByLayer</option>
          </Select>
          <Caret />
        </Field>
      </FieldColumn>
    </RibbonPanel>
    <RibbonPanel w={34} title="Groups">
      <Big w={21} icon="group">Group</Big>
      <Stack $cols="11px">
        <Small icon="ungroup" label="Ungroup" />
        <Small icon="groupEdit" label="Group edit" />
        <Small icon="groupOn" on label="Group selection" />
      </Stack>
    </RibbonPanel>
    <RibbonPanel w={51} title="Utilities">
      <Big w={33} icon="measure" caret>Measure</Big>
      <Stack $cols="12px">
        <Small icon="select" size={8} label="Quick select" />
        <Small icon="plus" size={8} label="Point" />
        <Small icon="calc" size={8} label="Calculator" />
      </Stack>
    </RibbonPanel>
    <RibbonPanel w={34} title="Clipboard" caret={false}>
      <Big w={19} icon="paste" caret>Paste</Big>
      <Stack $cols="12px">
        <Small icon="cut" size={8} label="Cut" />
        <Small icon="pages" size={8} label="Copy clip" />
      </Stack>
    </RibbonPanel>
    <RibbonPanel w={34} title="View" corner>
      <Big w={30} icon="base" size={14} caret>Base</Big>
    </RibbonPanel>
  </Ribbon>
)

const DetailPanel = () => (
  <Detail $x={294} $y={61}>
    <DetailTabs>
      <span>Parametric</span>
      <span>View</span>
      <span>Manage</span>
      <span>Output</span>
      <span>Ad</span>
    </DetailTabs>
    <DetailTools>
      {modifyTools.map(([icon, name, caret]) => (
        <DetailTool key={icon} aria-label={name || icon}>
          <Icon name={icon} size={13} />
          {name}
          {caret && <Caret />}
        </DetailTool>
      ))}
    </DetailTools>
    <DetailRow $gap={7}>
      {['setBylayer', 'bwSwap', 'line', 'pline', 'spline', 'hatchEdit', 'arrayEdit'].map((name) => (
        <Icon key={name} name={name} size={13} />
      ))}
    </DetailRow>
    <DetailRow $gap={8}>
      {['align', 'break', 'breakPoint', 'join', 'reverse', 'copyNested', 'broom', 'drawOrder'].map((name) => (
        <Icon key={name} name={name} size={13} />
      ))}
      <Caret />
    </DetailRow>
    <DetailFooter>
      <PinButton aria-label="Pin">
        <Icon name="pin" size={9} />
      </PinButton>
      <DetailName>Modify</DetailName>
    </DetailFooter>
  </Detail>
)

const OrderRow = ({ item: [name, art], h, active }) => (
  <MenuItem $h={h} $active={active} $gap={3}>
    <OrderIcon viewBox="0 0 22 18">{art}</OrderIcon>
    {name}
  </MenuItem>
)

const DrawingArea = () => (
  <Canvas>
    <Grid aria-hidden="true">
      <defs>
        <pattern id="minor" width="5.800" height="5.800" patternUnits="userSpaceOnUse">
          <path d="M0 .5h5.800M.5 0v5.800" stroke="#dcdcdf" fill="none" />
        </pattern>
        <pattern id="major" x="24" y="18" width="29" height="29" patternUnits="userSpaceOnUse">
          <path d="M0 .5h29M.5 0v29" stroke="#b0b0b6" fill="none" />
        </pattern>
      </defs>
      <rect width="100%" height="100%" fill="url(#minor)" />
      <rect width="100%" height="100%" fill="url(#major)" />
    </Grid>
    <ViewLabel $x={1} $y={1}>[−][Top][2D Wireframe]</ViewLabel>

    <Corner>
      <span>–</span>
      <span>▣</span>
      <span>✕</span>
    </Corner>
    <ViewCube>
      <Cell $col={2} $top>N</Cell>
      <Cell $col={1}>W</Cell>
      <CubeFace>TOP</CubeFace>
      <Cell $col={3}>E</Cell>
      <Cell $col={2}>S</Cell>
      <Cell $col={2} $color="#a3a3c2">WCS</Cell>
    </ViewCube>
    <NavBar />
    <Ucs viewBox="0 0 32 34">
      <path d="M4.500 6v19M6 25.500h19M2 23h5v5H2z" stroke="#444" fill="none" />
      <path d="M4 0l3 3L10 0M7 3v3M28 21l6 4M34 21l-6 4" stroke="#444" fill="none" />
    </Ucs>

    <CommandLine>
      <CommandTools>
        <span>×</span>
        <Icon name="wrench" size={7} />
      </CommandTools>
      <Prompt>&gt;_</Prompt>
      <Caret $size={1} $color="#888" />
      <CommandInput placeholder="Type a command" aria-label="Command" />
    </CommandLine>

    <OrderMenu $x={65} $y={5}>
      <DropButton w={35} h={14} icon="drawOrder" size={11} tail={8} label="Draw order" />
      <Menu $w={156}>
        {orderItems.map((item, i) => (
          <OrderRow key={item[0]} item={item} h={25} active={i === 0} />
        ))}
        <MenuRule />
        {annotationItems.map((item) => (
          <OrderRow key={item[0]} item={item} h={24} />
        ))}
      </Menu>
    </OrderMenu>

    <NarrowMenu $x={550} $y={11}>
      <DropButton w={60} h={21} icon="fillet" size={13} gap={5}>Fillet</DropButton>
      <Menu $w={96}>
        <MenuItem $h={35} $pad={5} $active><Icon name="filletLarge" size={24} />Fillet</MenuItem>
        <MenuItem $h={36} $pad={5}><Icon name="chamfer" size={24} />Chamfer</MenuItem>
        <MenuItem $h={36} $pad={5}><Icon name="blend" size={24} />Blend Curves</MenuItem>
      </Menu>
    </NarrowMenu>

    <NarrowMenu $x={607} $y={155} $size={10}>
      <DropButton w={54} h={21} icon="array" size={14}>Array</DropButton>
      <Menu $w={113}>
        <MenuItem $h={37} $pad={4} $gap={3} $active><Icon name="arrayLarge" size={24} />Rectangular Array</MenuItem>
        <MenuItem $h={37} $pad={4} $gap={3}><Icon name="pathArray" size={24} />Path Array</MenuItem>
        <MenuItem $h={37} $pad={4} $gap={3}><Icon name="polarArray" size={24} />Polar Array</MenuItem>
      </Menu>
    </NarrowMenu>

    <WideMenu $x={505} $y={212}>
      <DropButton w={73} h={19} icon="trim" size={16} gap={8}>Trim</DropButton>
      <Menu $w={88}>
        <MenuItem $h={31} $pad={7} $active><Icon name="trimWide" size={31} />Trim</MenuItem>
        <MenuItem $h={30} $pad={7}><Icon name="extendWide" size={31} />Extend</MenuItem>
      </Menu>
    </WideMenu>
  </Canvas>
)

const App = () => (
  <ThemeProvider theme={theme}>
    <GlobalStyle />
    <Page>
      <AppWindow>
        <Header>
          <AppButton aria-label="Application menu">
            <Logo viewBox="0 0 12 18">
              <path d="M0 17L5 1h4l3 13-3 1-1-4H4l-1 5z" fill="#c5161d" />
              <path d="M5 8l2-4 1 4z" fill="#777" />
            </Logo>
            <Caret $size={1} />
          </AppButton>
          <TitleBar>
            <QuickAccess>
              {['file', 'open', 'save', 'saveAs', 'print', 'undo'].map((name) => (
                <Icon key={name} name={name} size={9} />
              ))}
              <Caret $size={1} />
              <Icon name="redo" size={8} />
              <Caret $size={1} />
              <Caret />
            </QuickAccess>
            <Title>{'Autodesk AutoCAD 2018 - STUDENT VERSION    Drawing1.dwg'}</Title>
            <Search>
              <Caret $size={1} />
              <SearchInput placeholder="Type a keyword or phrase" aria-label="Search" />
              <Icon name="binoculars" size={8} />
              <Icon name="person" size={9} />
              Sign In
              <Spacer />
              <Caret $size={1} />
              <Icon name="cart" size={8} />
              <Icon name="exchange" size={9} />
              <Caret $size={1} />
              <Spacer />
              <Help>?</Help>
              <Caret $size={1} />
            </Search>
            <WindowButtons>
              <WindowButton aria-label="Minimize">
                <svg viewBox="0 0 6 8"><path d="M0 4.500h6" stroke="#222" /></svg>
              </WindowButton>
              <WindowButton aria-label="Restore" $active>
                <svg viewBox="0 0 6 8"><path d="M.5 2.500h4v5h-4zM2 .5h3.500V6" stroke="#222" fill="none" /></svg>
              </WindowButton>
              <WindowButton aria-label="Close">
                <svg viewBox="0 0 6 8"><path d="M.5 1l5 6M5.500 1l-5 6" stroke="#222" /></svg>
              </WindowButton>
            </WindowButtons>
          </TitleBar>
          <TabList>
            {tabs.map((name, i) => (
              <Tab key={name} $active={i === 0}>{name}</Tab>
            ))}
            <ViewTab aria-label="Ribbon display">
              <Icon name="viewport" size={6} />
              <Caret $size={1} />
            </ViewTab>
          </TabList>
        </Header>
        <RibbonPanels />
        <FileTabs>
          <FileTab>
            <span>Drawing1</span>
            <span>×</span>
          </FileTab>
          <AddTab>+</AddTab>
        </FileTabs>
        <DrawingArea />
        <StatusBar>
          <LayoutTabs>
            <LayoutTab $active>Model</LayoutTab>
            <LayoutTab>Layout1</LayoutTab>
            <LayoutTab>Layout2</LayoutTab>
            <LayoutTab $w={13}>+</LayoutTab>
          </LayoutTabs>
          <StatusTools>
            <StatusButton>MODEL</StatusButton>
            <Icon name="grid" size={8} />
            <StatusButton><Icon name="snap" size={7} /><Caret $size={1} /></StatusButton>
            <Icon name="ortho" size={7} />
            <StatusButton><Icon name="polar" size={8} /><Caret $size={1} /></StatusButton>
            <StatusButton><Icon name="iso" size={8} /><Caret $size={1} /></StatusButton>
            <Icon name="track" size={8} />
            <StatusButton><Icon name="osnap" size={8} /><Caret $size={1} /></StatusButton>
            <Icon name="annoOn" size={8} />
            <Icon name="anno" size={8} />
            <Icon name="anno" size={8} />
            <StatusButton>1:1<Caret $size={1} /></StatusButton>
            <StatusButton><Icon name="gear" size={6} /><Caret $size={1} /></StatusButton>
            <Icon name="plus" size={8} />
            <Icon name="accel" size={9} />
            <Icon name="isolate" size={8} />
            <Icon name="clean" size={8} />
            <Icon name="burger" size={7} />
          </StatusTools>
        </StatusBar>

        <Annotations viewBox="0 0 742 402" aria-hidden="true">
          <path d="M292 145L504 147V333L291 332z" fill="#fff" stroke={theme.red} strokeWidth="2" />
          <rect x="157.500" y="62.500" width="32" height="16" fill="none" stroke={theme.red} strokeWidth="2" />
        </Annotations>
        <Floating $x={2} $y={87}>
          <DetailPanel />
          <Marker $x={449} $y={87} $size={18}>1</Marker>
          <Marker $x={449} $y={110} $size={18}>2</Marker>
          <Marker $x={449} $y={133} $size={18}>3</Marker>
          <Marker $x={533} $y={8} $size={24}>2</Marker>
          <Marker $x={593} $y={152} $size={22}>3</Marker>
          <Marker $x={503} $y={190} $size={22}>1</Marker>
        </Floating>
        <Annotations viewBox="0 0 742 402" aria-hidden="true">
          <path d="M231 71L297 152" stroke={theme.red} strokeWidth="4" />
          <g stroke={theme.marker} fill="none" strokeLinecap="round" strokeLinejoin="round">
            <path d="M451 304C412 338 356 362 314 362C274 362 240 342 225 322" strokeWidth="6" />
            <path d="M224 347L223 319L254 320" strokeWidth="6" />
          </g>
        </Annotations>
      </AppWindow>
      <Caption>
        <FigureNumber>Şekil 3.5</FigureNumber> Modify Menüsü
      </Caption>
    </Page>
  </ThemeProvider>
)

export default App
